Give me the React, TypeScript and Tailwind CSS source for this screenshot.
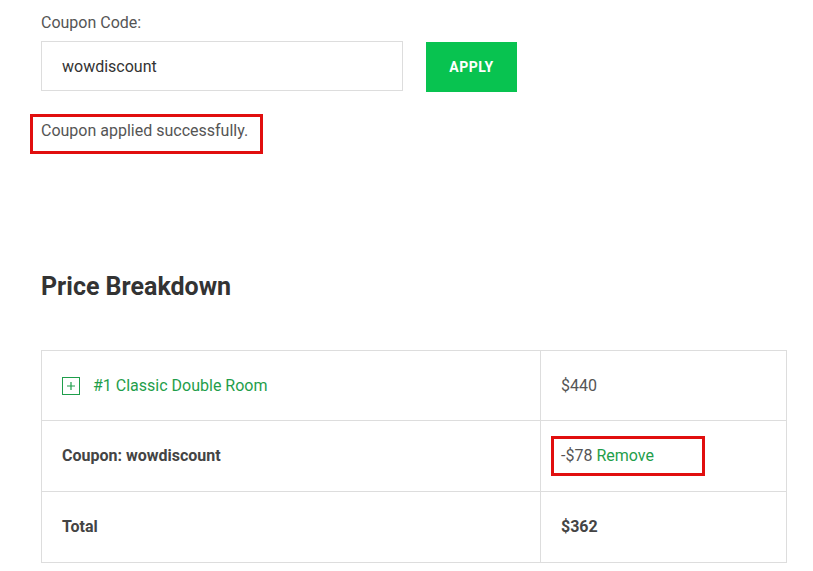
export default function App() {
  const font = { fontFamily: "Roboto, 'Liberation Sans', sans-serif" };

  return (
    <div className="min-h-[571px] w-[813px] bg-white pl-[41px] pt-[11px] text-[#555]" style={font}>
      <label className="block text-[16px] leading-[24px] text-[#555]">Coupon Code:</label>

      <div className="mt-[6px] flex items-start gap-[23px]">
        <input
          readOnly
          value="wowdiscount"
          className="h-[50px] w-[362px] border border-[#ddd] bg-white px-[20px] text-[16px] text-[#333] outline-none"
        />
        <button className="mt-[1px] h-[50px] w-[91px] bg-[#08c350] text-[14px] font-bold tracking-[0.5px] text-white">
          APPLY
        </button>
      </div>

      <div className="ml-[-11px] mt-[22px] h-[40px] w-[233px] border-[3px] border-[#e10f0f] pl-[8px] pt-[2px] text-[16px] leading-[24px] text-[#555]">
        Coupon applied successfully.
      </div>

      <h2 className="mt-[117px] text-[25px] font-bold leading-[32px] text-[#333]">Price Breakdown</h2>

      <table className="mt-[47px] w-[746px] border-collapse text-[16px] leading-[24px]">
        <tbody>
          <tr className="h-[70px]">
            <td className="w-[499px] border border-[#ddd] px-[20px]">
              <div className="flex items-center gap-[13px] text-[#1f9e4b]">
                <span className="flex h-[18px] w-[18px] items-center justify-center border border-[#1f9e4b]">
                  <svg width="10" height="10" viewBox="0 0 10 10">
                    <path d="M5 1v8M1 5h8" stroke="#1f9e4b" strokeWidth="1.2" />
                  </svg>
                </span>
                <span>#1 Classic Double Room</span>
              </div>
            </td>
            <td className="border border-[#ddd] px-[20px] text-[#555]">$440</td>
          </tr>
          <tr className="h-[71px]">
            <td className="border border-[#ddd] px-[20px] font-bold text-[#444]">Coupon: wowdiscount</td>
            <td className="border border-[#ddd] px-[20px]">
              <div className="ml-[-10px] h-[40px] w-[154px] border-[3px] border-[#e10f0f] pl-[7px] pt-[5px] text-[#555]">
                -$78 <span className="text-[#1f9e4b]">Remove</span>
              </div>
            </td>
          </tr>
          <tr className="h-[71px]">
            <td className="border border-[#ddd] px-[20px] font-bold text-[#444]">Total</td>
            <td className="border border-[#ddd] px-[20px] font-bold text-[#444]">$362</td>
          </tr>
        </tbody>
      </table>
    </div>
  );
}
